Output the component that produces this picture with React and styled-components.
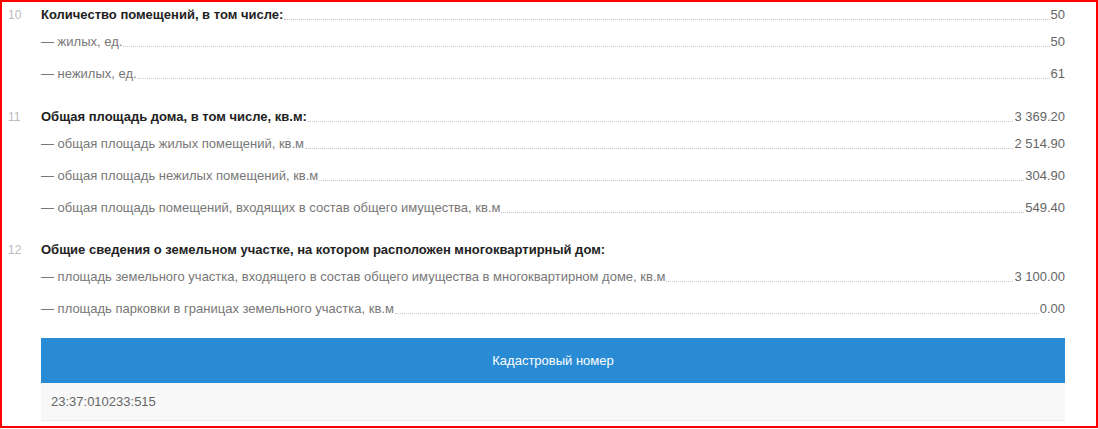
import React from 'react';
import styled, { createGlobalStyle } from 'styled-components';

const Global = createGlobalStyle`
  html, body {
    margin: 0;
    padding: 0;
    background: #fff;
  }
  body {
    font-family: "Liberation Sans", Arial, sans-serif;
  }
`;

const Frame = styled.div`
  box-sizing: border-box;
  width: 1098px;
  height: 428px;
  border: 2px solid #f00;
  padding: 3px 31px 0 6px;
`;

const Section = styled.div`
  display: flex;
  margin-bottom: ${p => p.gap || 0}px;
`;

const Num = styled.div`
  width: 33px;
  flex: none;
  font-size: 12px;
  line-height: 20px;
  color: #bbb;
`;

const Body = styled.div`
  flex: 1;
  min-width: 0;
`;

const Row = styled.div`
  display: flex;
  align-items: flex-end;
  font-size: 13px;
  line-height: 20px;
  margin-bottom: ${p => (p.title ? 7 : 0)}px;
  padding-bottom: ${p => (p.title ? 0 : 12)}px;
`;

const Label = styled.span`
  white-space: nowrap;
  color: ${p => (p.title ? '#222' : '#777')};
  font-weight: ${p => (p.title ? 'bold' : 'normal')};
`;

const Leader = styled.span`
  flex: 1;
  min-width: 10px;
  border-bottom: 1px dotted #c4c4c4;
  margin: 0 1px 5px;
`;

const Value = styled.span`
  white-space: nowrap;
  color: #666;
`;

const Cadastre = styled.div`
  margin: 7px 0 0 33px;
`;

const CadastreHead = styled.div`
  height: 45px;
  background: #288bd4;
  color: #fff;
  font-size: 13px;
  display: flex;
  align-items: center;
  justify-content: center;
`;

const CadastreBody = styled.div`
  height: 37px;
  background: #f8f8f8;
  border-bottom: 1px solid #efe9e3;
  color: #666;
  font-size: 13px;
  display: flex;
  align-items: center;
  padding-left: 10px;
`;

const sections = [
  {
    num: '10',
    title: 'Количество помещений, в том числе:',
    value: '50',
    rows: [
      ['— жилых, ед.', '50'],
      ['— нежилых, ед.', '61'],
    ],
  },
  {
    num: '11',
    title: 'Общая площадь дома, в том числе, кв.м:',
    value: '3 369.20',
    rows: [
      ['— общая площадь жилых помещений, кв.м', '2 514.90'],
      ['— общая площадь нежилых помещений, кв.м', '304.90'],
      ['— общая площадь помещений, входящих в состав общего имущества, кв.м', '549.40'],
    ],
  },
  {
    num: '12',
    title: 'Общие сведения о земельном участке, на котором расположен многоквартирный дом:',
    rows: [
      ['— площадь земельного участка, входящего в состав общего имущества в многоквартирном доме, кв.м', '3 100.00'],
      ['— площадь парковки в границах земельного участка, кв.м', '0.00'],
    ],
  },
];

export default function App() {
  return (
    <>
      <Global />
      <Frame>
        {sections.map((s, i) => (
          <Section key={s.num} gap={i === 0 ? 11 : i === 1 ? 10 : 0}>
            <Num>{s.num}</Num>
            <Body>
              <Row title="1">
                <Label title="1">{s.title}</Label>
                {s.value && <Leader />}
                {s.value && <Value>{s.value}</Value>}
              </Row>
              {s.rows.map(([label, value]) => (
                <Row key={label}>
                  <Label>{label}</Label>
                  <Leader />
                  <Value>{value}</Value>
                </Row>
              ))}
            </Body>
          </Section>
        ))}
        <Cadastre>
          <CadastreHead>Кадастровый номер</CadastreHead>
          <CadastreBody>23:37:010233:515</CadastreBody>
        </Cadastre>
      </Frame>
    </>
  );
}
